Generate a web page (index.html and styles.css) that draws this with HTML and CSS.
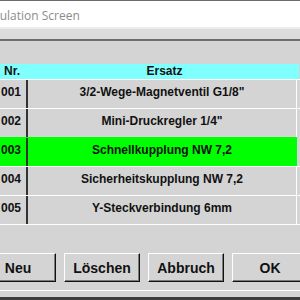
FILE: index.html
```html
<!DOCTYPE html>
<html>
<head>
  <title>Simulation Screen</title>
  <link rel="stylesheet" href="styles.css">
</head>
<body>
  <div class="window">
    <div class="titlebar">Simulation Screen</div>
    <div class="menubar"></div>

    <div class="client">
      <div class="grid">
        <div class="row head">
          <div class="nr">Nr.</div>
          <div class="ersatz">Ersatz</div>
        </div>
        <div class="row">
          <div class="nr">001</div>
          <div class="ersatz">3/2-Wege-Magnetventil G1/8"</div>
        </div>
        <div class="row">
          <div class="nr">002</div>
          <div class="ersatz">Mini-Druckregler 1/4"</div>
        </div>
        <div class="row selected">
          <div class="nr">003</div>
          <div class="ersatz">Schnellkupplung NW 7,2</div>
        </div>
        <div class="row">
          <div class="nr">004</div>
          <div class="ersatz">Sicherheitskupplung NW 7,2</div>
        </div>
        <div class="row last">
          <div class="nr">005</div>
          <div class="ersatz">Y-Steckverbindung 6mm</div>
        </div>
      </div>

      <div class="buttons">
        <button class="btn">Neu</button>
        <button class="btn">Löschen</button>
        <button class="btn">Abbruch</button>
        <button class="btn">OK</button>
      </div>
    </div>

    <div class="statusbar"></div>
  </div>
</body>
</html>
```

FILE: styles.css
```css
body {
  margin: 0;
  padding: 0;
  background-color: #d4d4d4;
  font-family: "Liberation Sans", Arial, sans-serif;
  overflow: hidden;
}

.window {
  width: 300px;
  height: 300px;
  overflow: hidden;
}

.titlebar {
  height: 23px;
  padding-top: 3px;
  line-height: 24px;
  background-color: #fff;
  border-top: 1px solid #6a6a6a;
  font-family: "Open Sans", sans-serif;
  font-size: 12px;
  color: #8c8c8c;
  text-indent: -21px;
  white-space: nowrap;
  overflow: hidden;
}

.menubar {
  height: 10px;
  background-color: #dcdcdc;
  border-top: 2px solid #ececec;
  border-bottom: 2px solid #6e6e6e;
}

.client {
  padding-top: 23px;
}

/* grid */
.grid {
  font-size: 12px;
  font-weight: bold;
  color: #111;
}

.row {
  display: flex;
  height: 28px;
  line-height: 25px;
  border-top: 1px solid #fff;
}

.row.last {
  border-bottom: 1px solid #fff;
}

.row .nr {
  width: 28px;
  padding-left: 1px;
  box-sizing: border-box;
  border-right: 2px solid #333;
}

.row .ersatz {
  flex-grow: 1;
  text-align: center;
  border-right: 1px solid #fff;
  margin-right: 3px;
}

.row.head {
  height: 15px;
  line-height: 15px;
  border-top: none;
  background-color: #80ffff;
  margin-right: 1px;
}

.row.head .nr {
  padding-left: 4px;
  border-right: none;
}

.row.head .ersatz {
  border-right: none;
  margin-right: 0;
  padding-left: 2px;
}

.row.selected {
  background-color: #00ff00;
  border-top-color: #00ff00;
  margin-right: 3px;
}

.row.selected .ersatz {
  margin-right: 0;
  border-right-color: #00ff00;
}

/* buttons */
.buttons {
  display: flex;
  gap: 8px;
  margin-top: 28px;
  margin-left: -20px;
}

.btn {
  flex-shrink: 0;
  width: 76px;
  height: 29px;
  padding: 0;
  font-family: inherit;
  font-size: 14px;
  font-weight: bold;
  color: #111;
  background-color: #d4d4d4;
  border-top: 1px solid #fff;
  border-left: 1px solid #fff;
  border-right: 1px solid #111;
  border-bottom: 1px solid #111;
  box-shadow: inset -1px -1px #7a7a7a;
}

.statusbar {
  margin-top: 8px;
  height: 6px;
  border-top: 1px solid #fff;
  border-bottom: 3px solid #3c3c3c;
}
```
